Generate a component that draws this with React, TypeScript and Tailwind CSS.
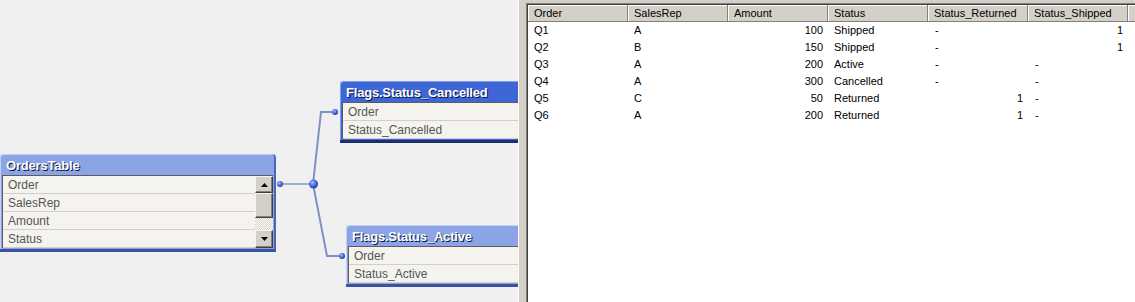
import React from "react";

type BoxProps = {
  className: string;
  title: string;
  fields: string[];
  dark?: boolean;
  scroll?: boolean;
};

const ScrollBtn = ({ down }: { down?: boolean }) => (
  <div
    className={`${down ? "h-[18px]" : "h-[17px]"} bg-[#d4d0c8] border border-t-[#f4f3ef] border-l-[#f4f3ef] border-r-[#404040] border-b-[#404040] shadow-[inset_-1px_-1px_0_#808080] flex items-center justify-center`}
  >
    <svg width="7" height="4" viewBox="0 0 7 4">
      <path d={down ? "M0 0H7L3.5 4Z" : "M0 4H7L3.5 0Z"} fill="#000" />
    </svg>
  </div>
);

const Scrollbar = () => (
  <div className="w-[18px] flex flex-col">
    <ScrollBtn />
    <div className="h-[25px] bg-[#d4d0c8] border border-t-[#f4f3ef] border-l-[#f4f3ef] border-r-[#404040] border-b-[#404040] shadow-[inset_-1px_-1px_0_#808080]" />
    <div className="h-[12px] bg-[image:repeating-conic-gradient(#ffffff_0_25%,#d4d0c8_0_50%)] bg-[length:2px_2px]" />
    <ScrollBtn down />
  </div>
);

const TableBox = ({ className, title, fields, dark, scroll }: BoxProps) => (
  <div
    className={`absolute ${className} rounded-t-[4px] border-r-2 border-b-[3px] pl-[2px] pr-px pb-px ${
      dark
        ? "bg-[#3e66d6] border-r-[#22388a] border-b-[#1c2e72] shadow-[inset_1px_1px_0_#7f9ef0]"
        : "bg-[#8aa4e6] border-r-[#4c64b4] border-b-[#3c529e] shadow-[inset_1px_1px_0_#c2d0f6]"
    }`}
  >
    <div className="h-[21px] pt-[3px] pl-[4px] leading-[18px] text-white font-bold text-[13px] tracking-[-0.2px] whitespace-nowrap [text-shadow:1px_1px_0_#0a1440]">
      {title}
    </div>
    <div className="flex border-t border-l border-[#5c5c5c] bg-[#f5f3ee]">
      <div className="flex-1 min-w-0">
        {fields.map((f) => (
          <div
            key={f}
            className="h-[18px] border-b border-[#d3cfc7] pl-[5px] text-[12px] leading-[18px] text-[#555555] whitespace-nowrap"
          >
            {f}
          </div>
        ))}
      </div>
      {scroll && <Scrollbar />}
    </div>
  </div>
);

const columns = ["Order", "SalesRep", "Amount", "Status", "Status_Returned", "Status_Shipped"];

const rows: (string | number | null)[][] = [
  ["Q1", "A", 100, "Shipped", null, 1],
  ["Q2", "B", 150, "Shipped", null, 1],
  ["Q3", "A", 200, "Active", null, null],
  ["Q4", "A", 300, "Cancelled", null, null],
  ["Q5", "C", 50, "Returned", 1, null],
  ["Q6", "A", 200, "Returned", 1, null],
];

const Cell = ({ v }: { v: string | number | null }) => {
  if (v === null) return <div className="w-[100px] shrink-0 pl-[7px]">-</div>;
  if (typeof v === "number") return <div className="w-[100px] shrink-0 pr-[5px] text-right">{v}</div>;
  return <div className="w-[100px] shrink-0 pl-[6px]">{v}</div>;
};

export default function App() {
  return (
    <div className="flex w-[1135px] h-[302px] overflow-hidden font-['Liberation_Sans',Arial,sans-serif]">
      {/* model viewer canvas */}
      <div className="relative w-[518px] h-full bg-[#f0f0f0] overflow-hidden">
        <TableBox
          className="left-0 top-[154px] w-[276px]"
          title="OrdersTable"
          fields={["Order", "SalesRep", "Amount", "Status"]}
          scroll
        />
        <TableBox
          className="left-[340px] top-[81px] w-[200px]"
          title="Flags.Status_Cancelled"
          fields={["Order", "Status_Cancelled"]}
          dark
        />
        <TableBox
          className="left-[346px] top-[225px] w-[200px]"
          title="Flags.Status_Active"
          fields={["Order", "Status_Active"]}
        />
        <svg className="absolute left-0 top-0" width="518" height="302">
          <defs>
            <radialGradient id="dot" cx="38%" cy="35%" r="70%">
              <stop offset="0" stopColor="#a9c0ff" />
              <stop offset="0.5" stopColor="#4a72dc" />
              <stop offset="1" stopColor="#1b3a9c" />
            </radialGradient>
          </defs>
          <g fill="none" strokeWidth="2">
            <path d="M278 184H313" stroke="#9eabd6" />
            <path d="M313 184L321 112H335" stroke="#8190c6" />
            <path d="M313 184L327 256H342" stroke="#8190c6" />
          </g>
          <circle cx="280" cy="184" r="3" fill="url(#dot)" />
          <circle cx="313.5" cy="184" r="4.5" fill="url(#dot)" />
          <circle cx="335" cy="112" r="3" fill="url(#dot)" />
          <circle cx="342" cy="256" r="3" fill="url(#dot)" />
        </svg>
      </div>

      {/* splitter */}
      <div className="w-[8px] h-full bg-[#d4d0c8] border-l border-[#fbfbf9]" />

      {/* table box */}
      <div className="flex-1 h-full bg-[#d4d0c8] pt-[3px] flex flex-col min-w-0">
        <div className="flex-1 border-t border-l border-[#808080] flex flex-col min-h-0">
          <div className="flex-1 border-t border-l border-[#404040] bg-white overflow-hidden text-[11px] text-black">
            <div className="flex h-[17px]">
              {columns.map((c) => (
                <div
                  key={c}
                  className="w-[100px] shrink-0 bg-[#d4d0c8] border-r border-b border-[#808080] shadow-[inset_1px_1px_0_#ffffff] pl-[6px] leading-[17px] whitespace-nowrap"
                >
                  {c}
                </div>
              ))}
              <div className="flex-1 bg-[#d4d0c8] border-b border-[#808080] shadow-[inset_1px_1px_0_#ffffff]" />
            </div>
            {rows.map((r) => (
              <div key={String(r[0])} className="flex h-[17px] leading-[17px] whitespace-nowrap">
                {r.map((v, i) => (
                  <Cell key={i} v={v} />
                ))}
              </div>
            ))}
          </div>
        </div>
      </div>
    </div>
  );
}
